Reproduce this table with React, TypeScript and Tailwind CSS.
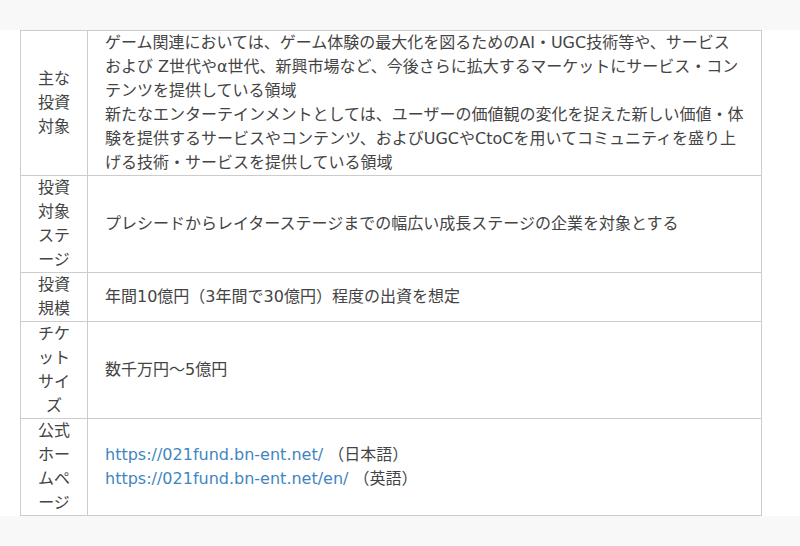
import React from "react";

const font = { fontFamily: '"DejaVu Sans", "Noto Sans CJK JP", sans-serif' };

function Row({ label, children, first }: { label: string[]; children: React.ReactNode; first?: boolean }) {
  return (
    <div className={`flex ${first ? "" : "border-t border-[#cccccc]"}`}>
      <div className="w-[67px] shrink-0 border-r border-[#cccccc] flex flex-col justify-center items-center text-center">
        {label.map((l, i) => (
          <div key={i} className="whitespace-nowrap">{l}</div>
        ))}
      </div>
      <div className="flex-1 pl-[17px] pr-4 flex flex-col justify-center">{children}</div>
    </div>
  );
}

export default function App() {
  return (
    <div className="w-[800px] h-[546px] bg-[#f8f8f8] pt-[30px] overflow-hidden" style={font}>
      <div className="bg-white pl-[20px] h-[486px] text-[16px] leading-[24px] text-[#444444]">
        <div className="w-[742px] border border-[#cccccc]">
          <Row first label={["主な", "投資", "対象"]}>
            <div className="whitespace-nowrap">ゲーム関連においては、ゲーム体験の最大化を図るためのAI・UGC技術等や、サービス</div>
            <div className="whitespace-nowrap">および Z世代やα世代、新興市場など、今後さらに拡大するマーケットにサービス・コン</div>
            <div className="whitespace-nowrap">テンツを提供している領域</div>
            <div className="whitespace-nowrap">新たなエンターテインメントとしては、ユーザーの価値観の変化を捉えた新しい価値・体</div>
            <div className="whitespace-nowrap">験を提供するサービスやコンテンツ、およびUGCやCtoCを用いてコミュニティを盛り上</div>
            <div className="whitespace-nowrap">げる技術・サービスを提供している領域</div>
          </Row>
          <Row label={["投資", "対象", "ステ", "ージ"]}>
            <div>プレシードからレイターステージまでの幅広い成長ステージの企業を対象とする</div>
          </Row>
          <Row label={["投資", "規模"]}>
            <div>年間10億円（3年間で30億円）程度の出資を想定</div>
          </Row>
          <Row label={["チケ", "ット", "サイ", "ズ"]}>
            <div>数千万円～5億円</div>
          </Row>
          <Row label={["公式", "ホー", "ムペ", "ージ"]}>
            <div>
              <a className="text-[#3f86c0]" href="#">https://021fund.bn-ent.net/</a> （日本語）
            </div>
            <div>
              <a className="text-[#3f86c0]" href="#">https://021fund.bn-ent.net/en/</a> （英語）
            </div>
          </Row>
        </div>
      </div>
    </div>
  );
}
